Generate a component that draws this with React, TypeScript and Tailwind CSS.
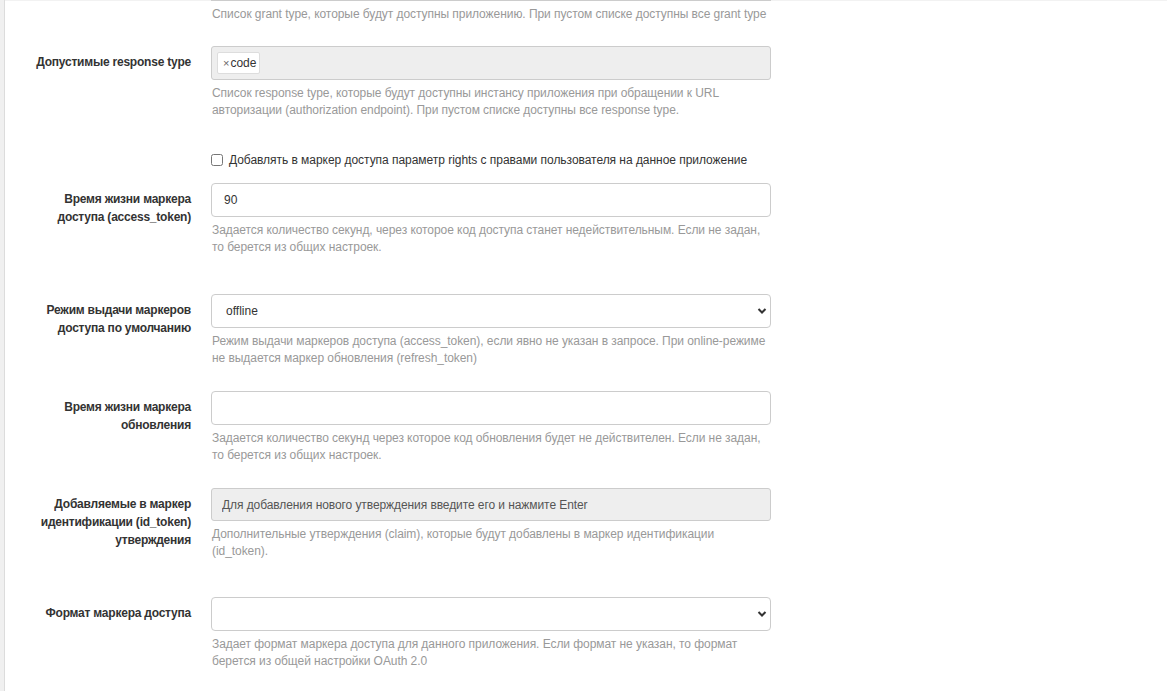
import React from 'react';

const font = { fontFamily: '"Liberation Sans", Arial, sans-serif' };

const Label = ({ children }: { children: React.ReactNode }) => (
  <div className="w-[187px] shrink-0 pt-[7px] pr-px text-right text-[12px] font-bold leading-[18px] tracking-[-0.22px] text-[#333]">
    {children}
  </div>
);

const Help = ({ children }: { children: React.ReactNode }) => (
  <p className="mt-[5px] pl-px text-[12px] leading-[17px] tracking-[-0.06px] text-[#999]">{children}</p>
);

const Chevron = () => (
  <svg className="pointer-events-none absolute right-[4px] top-1/2 -translate-y-1/2" width="10" height="8" viewBox="0 0 10 8">
    <path d="M1.5 2 L5 5.5 L8.5 2" fill="none" stroke="#333" strokeWidth="2" />
  </svg>
);

const Row = ({
  label,
  children,
  className = '',
}: {
  label?: React.ReactNode;
  children: React.ReactNode;
  className?: string;
}) => (
  <div className={`flex ${className}`}>
    <Label>{label}</Label>
    <div className="ml-[19px] w-[560px]">{children}</div>
  </div>
);

export default function App() {
  return (
    <div className="flex min-h-[691px] w-full bg-white" style={font}>
      <aside className="w-[5px] shrink-0 border-r border-[#dcdcdc] bg-[#f0f0f0]" />
      <main className="flex-1 border-t border-[#f2f2f2]">
        <Row className="-mt-px">
          <div className="h-px border-b border-[#ccc]" />
          <Help>Список grant type, которые будут доступны приложению. При пустом списке доступны все grant type</Help>
        </Row>

        <Row label="Допустимые response type" className="mt-[23px]">
          <div className="flex h-[34px] items-center rounded-[3px] border border-[#ccc] bg-[#eee] px-[5px]">
            <span className="flex h-[22px] items-center rounded-[2px] border border-[#ddd] bg-white pl-[5px] pr-[3px] text-[12px] text-[#333]">
              <span className="mr-px text-[11px] text-[#666]">×</span>code
            </span>
          </div>
          <Help>
            Список response type, которые будут доступны инстансу приложения при обращении к URL
            <br />
            авторизации (authorization endpoint). При пустом списке доступны все response type.
          </Help>
        </Row>

        <Row className="mt-[32px]">
          <label className="flex h-[17px] items-center text-[12px] tracking-[-0.04px] text-[#333]">
            <input type="checkbox" className="m-0 mr-[6px] h-[12px] w-[12px] rounded-[2px]" />
            Добавлять в маркер доступа параметр rights с правами пользователя на данное приложение
          </label>
        </Row>

        <Row
          className="mt-[15px]"
          label={
            <>
              Время жизни маркера
              <br />
              доступа (access_token)
            </>
          }
        >
          <input
            defaultValue="90"
            className="block h-[34px] w-full rounded-[4px] border border-[#ccc] bg-white px-3 text-[12px] text-[#333] outline-none"
          />
          <Help>
            Задается количество секунд, через которое код доступа станет недействительным. Если не задан,
            <br />
            то берется из общих настроек.
          </Help>
        </Row>

        <Row
          className="mt-[38px]"
          label={
            <>
              Режим выдачи маркеров
              <br />
              доступа по умолчанию
            </>
          }
        >
          <div className="relative">
            <select
              defaultValue="offline"
              className="block h-[34px] w-full appearance-none rounded-[4px] border border-[#ccc] bg-white pl-[14px] text-[12px] text-[#333] outline-none"
            >
              <option value="offline">offline</option>
              <option value="online">online</option>
            </select>
            <Chevron />
          </div>
          <Help>
            Режим выдачи маркеров доступа (access_token), если явно не указан в запросе. При online-режиме
            <br />
            не выдается маркер обновления (refresh_token)
          </Help>
        </Row>

        <Row
          className="mt-[24px]"
          label={
            <>
              Время жизни маркера
              <br />
              обновления
            </>
          }
        >
          <input className="block h-[34px] w-full rounded-[4px] border border-[#ccc] bg-white px-3 text-[12px] text-[#333] outline-none" />
          <Help>
            Задается количество секунд через которое код обновления будет не действителен. Если не задан,
            <br />
            то берется из общих настроек.
          </Help>
        </Row>

        <Row
          className="mt-[24px]"
          label={
            <>
              Добавляемые в маркер
              <br />
              идентификации (id_token)
              <br />
              утверждения
            </>
          }
        >
          <input
            placeholder="Для добавления нового утверждения введите его и нажмите Enter"
            className="block h-[33px] w-full rounded-[3px] border border-[#ccc] bg-[#eee] px-[10px] text-[12px] tracking-[-0.08px] text-[#333] outline-none placeholder:text-[#555]"
          />
          <Help>
            Дополнительные утверждения (claim), которые будут добавлены в маркер идентификации
            <br />
            (id_token).
          </Help>
        </Row>

        <Row className="mt-[37px]" label="Формат маркера доступа">
          <div className="relative">
            <select className="block h-[34px] w-full appearance-none rounded-[4px] border border-[#ccc] bg-white pl-[14px] text-[12px] text-[#333] outline-none">
              <option value=""></option>
              <option value="jwt">JWT</option>
            </select>
            <Chevron />
          </div>
          <Help>
            Задает формат маркера доступа для данного приложения. Если формат не указан, то формат
            <br />
            берется из общей настройки OAuth 2.0
          </Help>
        </Row>
      </main>
    </div>
  );
}
